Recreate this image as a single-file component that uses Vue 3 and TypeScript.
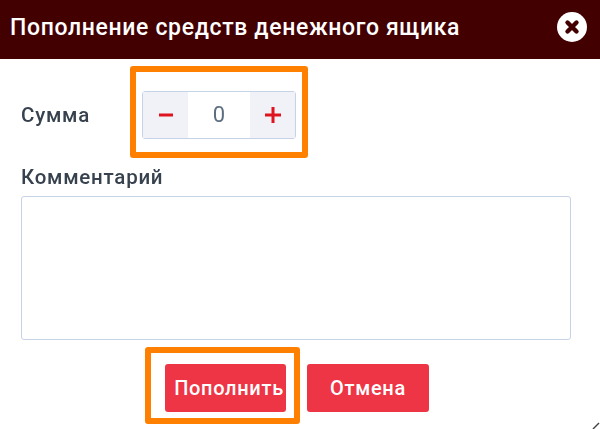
<script setup lang="ts">
const amount = 0
</script>

<template>
  <div class="dialog">
    <header class="dialog-head">
      <h1 class="dialog-title">Пополнение средств денежного ящика</h1>
      <svg class="close" width="30" height="30" viewBox="0 0 30 30">
        <circle cx="15" cy="15" r="15" fill="#fff" />
        <path d="M10.5 10.5 19.5 19.5M19.5 10.5 10.5 19.5" stroke="#430000" stroke-width="4.4" stroke-linecap="round" />
      </svg>
    </header>

    <div class="dialog-body">
      <div class="sum-row">
        <span class="label">Сумма</span>
        <div class="stepper">
          <span class="step">
            <svg width="14" height="4" viewBox="0 0 14 4"><path d="M0 2h14" stroke="#e0141e" stroke-width="3" /></svg>
          </span>
          <span class="value">{{ amount }}</span>
          <span class="step">
            <svg width="16" height="16" viewBox="0 0 16 16"><path d="M0 8h16M8 0v16" stroke="#e0141e" stroke-width="3" /></svg>
          </span>
          <i class="marker"></i>
        </div>
      </div>

      <label class="label comment-label">Комментарий</label>
      <div class="comment"></div>

      <div class="actions">
        <button class="btn topup">
          Пополнить
          <i class="marker"></i>
        </button>
        <button class="btn cancel">Отмена</button>
      </div>
    </div>

    <svg class="resize-mark" width="8" height="8" viewBox="0 0 8 8">
      <path d="M1 8 7 2" stroke="#444" stroke-width="1.4" />
    </svg>
  </div>
</template>

<style>
html, body {
  margin: 0;
  background: #fff;
}
</style>

<style scoped>
/* the reference is a slightly upscaled capture, hence the soft edges */
.dialog {
  width: 600px;
  height: 429px;
  overflow: hidden;
  position: relative;
  font-family: Roboto, "Liberation Sans", sans-serif;
  filter: blur(0.4px);
}

.dialog-head {
  height: 59px;
  box-sizing: border-box;
  background: #430000;
  display: flex;
  align-items: center;
  justify-content: space-between;
  padding: 0 13px 5px 10px;
}

.dialog-title {
  margin: 0;
  color: #fff;
  font-size: 23px;
  font-weight: 500;
  letter-spacing: 0.65px;
}

.dialog-body {
  padding: 32px 29px 0 21px;
}

.sum-row {
  display: flex;
  align-items: center;
  height: 48px;
}

.label {
  color: #37424e;
  font-size: 20.5px;
  font-weight: 500;
  line-height: 24px;
  letter-spacing: 0.75px;
}

.sum-row .label {
  width: 121px;
}

.stepper {
  position: relative;
  box-sizing: border-box;
  width: 154px;
  height: 48px;
  display: flex;
  border: 1px solid #c6d2e6;
  border-radius: 3px;
  background: #fff;
}

.step {
  width: 45px;
  background: #f0f2f8;
  display: flex;
  align-items: center;
  justify-content: center;
}

.value {
  flex: 1;
  color: #5c6e80;
  font-size: 22px;
  line-height: 46px;
  text-align: center;
}

.comment-label {
  display: block;
  margin-top: 26px;
}

.comment {
  box-sizing: border-box;
  height: 144px;
  margin-top: 7px;
  border: 1px solid #c6d2e6;
  border-radius: 3px;
}

.actions {
  display: flex;
  justify-content: center;
  gap: 21px;
  margin: 24px 0 0 2px;
}

.btn {
  position: relative;
  height: 48px;
  padding: 0;
  border: 0;
  border-radius: 3px;
  background: #ee3545;
  color: #fff;
  font-family: inherit;
  font-size: 20px;
  font-weight: 500;
  letter-spacing: 0.7px;
}

.topup {
  width: 121px;
  padding-left: 7px;
}

.cancel {
  width: 122px;
}

.marker {
  position: absolute;
  box-sizing: border-box;
  border: 6px solid #ff8000;
  border-radius: 3px;
  pointer-events: none;
}

.stepper .marker {
  left: -13px;
  top: -26px;
  width: 178px;
  height: 92px;
}

.topup .marker {
  left: -20px;
  top: -17px;
  width: 155px;
  height: 77px;
}

.resize-mark {
  position: absolute;
  right: 0;
  bottom: 0;
}
</style>
